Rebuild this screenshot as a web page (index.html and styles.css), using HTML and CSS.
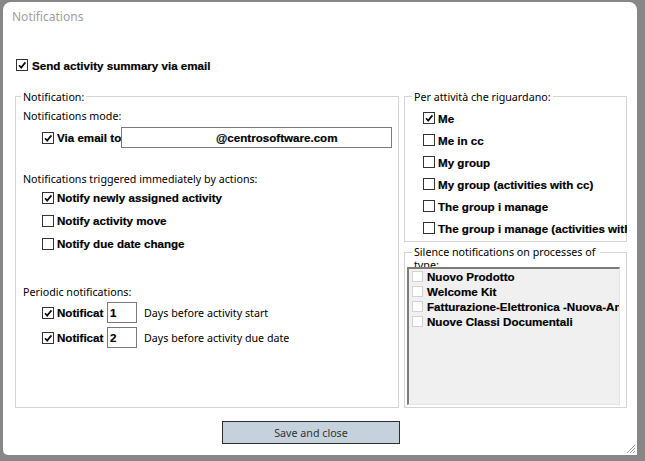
FILE: index.html
```html
<!DOCTYPE html>
<html>
<head>
<meta charset="utf-8">
<link rel="stylesheet" href="styles.css">
</head>
<body>
<div class="dialog">
  <div class="title">Notifications</div>
  <div class="row summary">
    <span class="cb"><svg viewBox="0 0 10 10"><path d="M2 5.2 L4.2 7.6 L8.4 2.4"/></svg></span>
    <span class="bold">Send activity summary via email</span>
  </div>
  <div class="main">
    <div class="group left">
      <div class="legend">Notification:</div>
      <div class="label mode">Notifications mode:</div>
      <div class="row email">
        <span class="cb"><svg viewBox="0 0 10 10"><path d="M2 5.2 L4.2 7.6 L8.4 2.4"/></svg></span>
        <span class="bold clip w64">Via email to</span>
        <div class="input wide bold">@centrosoftware.com</div>
      </div>
      <div class="label trig">Notifications triggered immediately by actions:</div>
      <div class="row act">
        <span class="cb"><svg viewBox="0 0 10 10"><path d="M2 5.2 L4.2 7.6 L8.4 2.4"/></svg></span>
        <span class="bold">Notify newly assigned activity</span>
      </div>
      <div class="row act">
        <span class="cb"></span>
        <span class="bold">Notify activity move</span>
      </div>
      <div class="row act">
        <span class="cb"></span>
        <span class="bold">Notify due date change</span>
      </div>
      <div class="label per">Periodic notifications:</div>
      <div class="row prow first">
        <span class="cb"><svg viewBox="0 0 10 10"><path d="M2 5.2 L4.2 7.6 L8.4 2.4"/></svg></span>
        <span class="bold clip w50">Notification</span>
        <div class="input small bold">1</div>
        <span class="days">Days before activity start</span>
      </div>
      <div class="row prow">
        <span class="cb"><svg viewBox="0 0 10 10"><path d="M2 5.2 L4.2 7.6 L8.4 2.4"/></svg></span>
        <span class="bold clip w50">Notification</span>
        <div class="input small bold">2</div>
        <span class="days">Days before activity due date</span>
      </div>
    </div>
    <div class="right">
      <div class="group g1">
        <div class="legend">Per attività che riguardano:</div>
        <div class="items">
          <div class="row item"><span class="cb"><svg viewBox="0 0 10 10"><path d="M2 5.2 L4.2 7.6 L8.4 2.4"/></svg></span><span class="bold">Me</span></div>
          <div class="row item"><span class="cb"></span><span class="bold">Me in cc</span></div>
          <div class="row item"><span class="cb"></span><span class="bold">My group</span></div>
          <div class="row item"><span class="cb"></span><span class="bold">My group (activities with cc)</span></div>
          <div class="row item"><span class="cb"></span><span class="bold">The group i manage</span></div>
          <div class="row item"><span class="cb"></span><span class="bold">The group i manage (activities with cc)</span></div>
        </div>
      </div>
      <div class="group g2">
        <div class="legend wrap">Silence notifications on processes of type:</div>
        <div class="listbox">
          <div class="li"><span class="lcb"></span><span class="bold">Nuovo Prodotto</span></div>
          <div class="li"><span class="lcb"></span><span class="bold">Welcome Kit</span></div>
          <div class="li"><span class="lcb"></span><span class="bold">Fatturazione-Elettronica -Nuova-Anagrafica</span></div>
          <div class="li"><span class="lcb"></span><span class="bold">Nuove Classi Documentali</span></div>
        </div>
      </div>
    </div>
  </div>
  <div class="footer">
    <button class="save">Save and close</button>
  </div>
  <svg class="grip" width="11" height="11" viewBox="0 0 11 11">
    <path d="M10 2 L2 10 M10 5 L5 10 M10 8 L8 10"/>
  </svg>
</div>
</body>
</html>
```

FILE: styles.css
```css
html, body {
  margin: 0;
  background: #878787;
}
body {
  padding: 2px 0 0 3px;
  width: 642px;
  height: 459px;
  overflow: hidden;
}
.dialog {
  position: relative;
  box-sizing: border-box;
  width: 634px;
  height: 453px;
  background: #fff;
  border-radius: 8px 8px 0 5px;
  font-family: "Noto Sans", sans-serif;
  font-size: 10.7px;
  color: #000;
}
.title {
  padding: 7px 0 0 9px;
  height: 16px;
  line-height: 16px;
  font-size: 12px;
  color: #a0a0a0;
}
.row {
  display: flex;
  align-items: center;
  white-space: nowrap;
}
.summary {
  height: 14px;
  margin-top: 33px;
  padding-left: 13px;
}
.summary .cb {
  margin-right: 4px;
}
.bold {
  font-family: "Liberation Sans", Arial, sans-serif;
  font-weight: bold;
  font-size: 11.6px;
  -webkit-text-stroke: 0.2px #000;
}
.cb {
  box-sizing: border-box;
  flex: none;
  width: 12px;
  height: 12px;
  border: 1px solid #333;
  background: #fff;
  margin-right: 3px;
  display: flex;
}
.cb svg {
  width: 10px;
  height: 10px;
  fill: none;
  stroke: #111;
  stroke-width: 1.7;
}
.main {
  display: flex;
  gap: 5px;
  margin: 24px 0 0 12px;
  height: 312px;
}
.group {
  box-sizing: border-box;
  border: 1px solid #d4d4d4;
}
.left {
  width: 384px;
  height: 312px;
  padding-left: 7px;
}
.legend {
  width: max-content;
  height: 14px;
  line-height: 14px;
  margin: -7px 0 0 -2px;
  padding: 0 2px;
  background: #fff;
  white-space: nowrap;
}
.label {
  height: 14px;
  line-height: 14px;
}
.mode {
  margin-top: 5px;
}
.email {
  margin-top: 4px;
  height: 21px;
  padding-left: 19px;
}
.clip {
  overflow: hidden;
  white-space: nowrap;
  flex: none;
}
.w64 {
  width: 64px;
}
.w50 {
  width: 47px;
  margin-right: 3px;
}
.input {
  box-sizing: border-box;
  height: 21px;
  line-height: 19px;
  border: 1px solid #7a7a7a;
  background: #fff;
  flex: none;
}
.wide {
  width: 271px;
  padding-left: 94px;
}
.small {
  width: 30px;
  padding-left: 2px;
}
.trig {
  margin-top: 24px;
}
.act {
  height: 23px;
  padding-left: 19px;
}
.per {
  margin-top: 30px;
}
.prow {
  height: 21px;
  padding-left: 19px;
  margin-top: 4px;
}
.prow.first {
  margin-top: 3px;
}
.days {
  margin-left: 7px;
}
.right {
  display: flex;
  flex-direction: column;
  gap: 10px;
  width: 223px;
}
.g1 {
  height: 146px;
  padding-left: 9px;
}
.items {
  margin: 3px -1px 0 0;
}
.item {
  height: 22px;
  padding-left: 9px;
  overflow: hidden;
}
.g2 {
  height: 156px;
  padding: 0 0 2px 2px;
}
.legend.wrap {
  width: 184px;
  height: 21px;
  line-height: 13px;
  margin: -7px 0 0 5px;
  white-space: normal;
}
.listbox {
  position: relative;
  box-sizing: border-box;
  width: 213px;
  height: 138px;
  background: #f0f0f0;
  border-top: 2px solid #7c7c7c;
  border-left: 2px solid #7c7c7c;
  border-right: 1px solid #e4e4e4;
  border-bottom: 1px solid #e4e4e4;
  overflow: hidden;
}
.li {
  display: flex;
  align-items: center;
  height: 15px;
  white-space: nowrap;
}
.lcb {
  flex: none;
  box-sizing: border-box;
  width: 11px;
  height: 11px;
  border: 1px solid #d2d2d2;
  background: #fff;
  margin: 0 4px 0 3px;
}
.footer {
  margin-top: 13px;
  padding-left: 219px;
}
.save {
  box-sizing: border-box;
  width: 178px;
  height: 23px;
  padding: 0;
  border: 1px solid #2e2e2e;
  background: #c5d1dd;
  font-family: "Noto Sans", sans-serif;
  font-size: 10.7px;
  color: #333;
}
.grip {
  position: absolute;
  right: 1px;
  bottom: 1px;
  fill: none;
  stroke: #9a9a9a;
  stroke-width: 1;
}
```
